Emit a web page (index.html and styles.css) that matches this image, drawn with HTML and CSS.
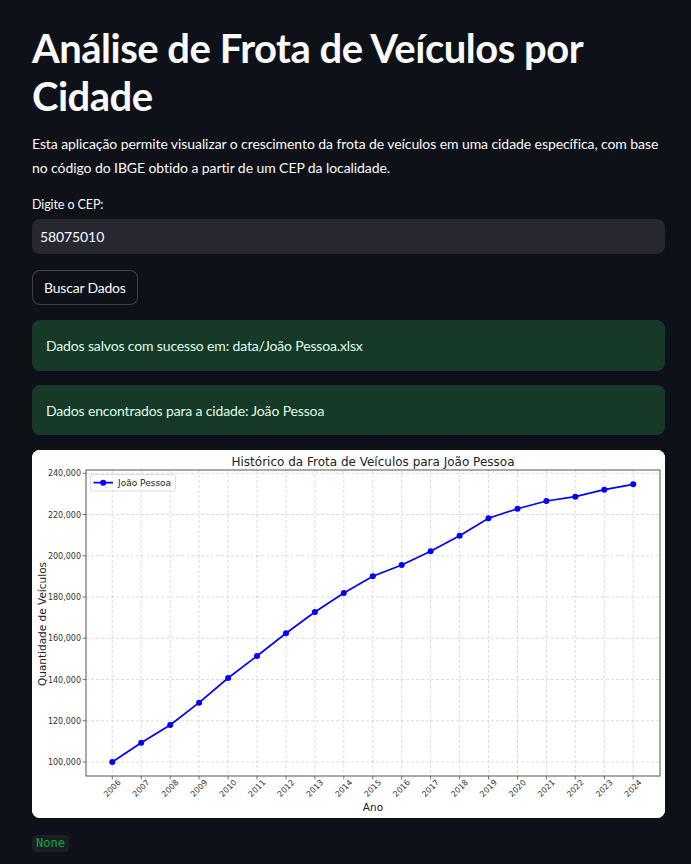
FILE: index.html
```html
<!DOCTYPE html>
<html lang="pt">
<head>
<meta charset="utf-8">
<title>Análise de Frota de Veículos por Cidade</title>
<link rel="stylesheet" href="styles.css">
</head>
<body>
<main class="main">
  <h1 class="title">Análise de Frota de Veículos por Cidade</h1>
  <p class="intro">Esta aplicação permite visualizar o crescimento da frota de veículos em uma cidade específica, com base no código do IBGE obtido a partir de um CEP da localidade.</p>
  <label class="field-label" for="cep">Digite o CEP:</label>
  <div class="input-box"><input id="cep" class="input" type="text" value="58075010"></div>
  <div class="btn-row"><button class="btn" type="button">Buscar Dados</button></div>
  <div class="alert">Dados salvos com sucesso em: data/João Pessoa.xlsx</div>
  <div class="alert">Dados encontrados para a cidade: João Pessoa</div>
  <div class="chart-card">
    <svg class="chart" viewBox="0 0 633 368" width="633" height="368" xmlns="http://www.w3.org/2000/svg">
      <rect x="0" y="0" width="633" height="368" fill="#ffffff"/>
      <text x="341" y="16" class="c-title" text-anchor="middle">Histórico da Frota de Veículos para João Pessoa</text>
      <g class="grid">
        <line x1="54" x2="628" y1="23.25" y2="23.25"/>
        <line x1="54" x2="628" y1="64.5" y2="64.5"/>
        <line x1="54" x2="628" y1="105.75" y2="105.75"/>
        <line x1="54" x2="628" y1="147" y2="147"/>
        <line x1="54" x2="628" y1="188.25" y2="188.25"/>
        <line x1="54" x2="628" y1="229.5" y2="229.5"/>
        <line x1="54" x2="628" y1="270.75" y2="270.75"/>
        <line x1="54" x2="628" y1="312" y2="312"/>
        <line y1="20" y2="326" x1="80.3" x2="80.3"/>
        <line y1="20" y2="326" x1="109.2" x2="109.2"/>
        <line y1="20" y2="326" x1="138.2" x2="138.2"/>
        <line y1="20" y2="326" x1="167.1" x2="167.1"/>
        <line y1="20" y2="326" x1="196.1" x2="196.1"/>
        <line y1="20" y2="326" x1="225" x2="225"/>
        <line y1="20" y2="326" x1="254" x2="254"/>
        <line y1="20" y2="326" x1="282.9" x2="282.9"/>
        <line y1="20" y2="326" x1="311.8" x2="311.8"/>
        <line y1="20" y2="326" x1="340.8" x2="340.8"/>
        <line y1="20" y2="326" x1="369.7" x2="369.7"/>
        <line y1="20" y2="326" x1="398.6" x2="398.6"/>
        <line y1="20" y2="326" x1="427.6" x2="427.6"/>
        <line y1="20" y2="326" x1="456.5" x2="456.5"/>
        <line y1="20" y2="326" x1="485.5" x2="485.5"/>
        <line y1="20" y2="326" x1="514.4" x2="514.4"/>
        <line y1="20" y2="326" x1="543.3" x2="543.3"/>
        <line y1="20" y2="326" x1="572.3" x2="572.3"/>
        <line y1="20" y2="326" x1="601.2" x2="601.2"/>
      </g>
      <rect x="54" y="20" width="574" height="306" class="spines"/>
      <g class="ticks">
        <line x1="50.5" x2="54" y1="23.25" y2="23.25"/>
        <line x1="50.5" x2="54" y1="64.5" y2="64.5"/>
        <line x1="50.5" x2="54" y1="105.75" y2="105.75"/>
        <line x1="50.5" x2="54" y1="147" y2="147"/>
        <line x1="50.5" x2="54" y1="188.25" y2="188.25"/>
        <line x1="50.5" x2="54" y1="229.5" y2="229.5"/>
        <line x1="50.5" x2="54" y1="270.75" y2="270.75"/>
        <line x1="50.5" x2="54" y1="312" y2="312"/>
        <line y1="326" y2="329.5" x1="80.3" x2="80.3"/>
        <line y1="326" y2="329.5" x1="109.2" x2="109.2"/>
        <line y1="326" y2="329.5" x1="138.2" x2="138.2"/>
        <line y1="326" y2="329.5" x1="167.1" x2="167.1"/>
        <line y1="326" y2="329.5" x1="196.1" x2="196.1"/>
        <line y1="326" y2="329.5" x1="225" x2="225"/>
        <line y1="326" y2="329.5" x1="254" x2="254"/>
        <line y1="326" y2="329.5" x1="282.9" x2="282.9"/>
        <line y1="326" y2="329.5" x1="311.8" x2="311.8"/>
        <line y1="326" y2="329.5" x1="340.8" x2="340.8"/>
        <line y1="326" y2="329.5" x1="369.7" x2="369.7"/>
        <line y1="326" y2="329.5" x1="398.6" x2="398.6"/>
        <line y1="326" y2="329.5" x1="427.6" x2="427.6"/>
        <line y1="326" y2="329.5" x1="456.5" x2="456.5"/>
        <line y1="326" y2="329.5" x1="485.5" x2="485.5"/>
        <line y1="326" y2="329.5" x1="514.4" x2="514.4"/>
        <line y1="326" y2="329.5" x1="543.3" x2="543.3"/>
        <line y1="326" y2="329.5" x1="572.3" x2="572.3"/>
        <line y1="326" y2="329.5" x1="601.2" x2="601.2"/>
      </g>
      <g class="ylabels" text-anchor="end">
        <text x="49" y="26.25">240,000</text>
        <text x="49" y="67.5">220,000</text>
        <text x="49" y="108.75">200,000</text>
        <text x="49" y="150">180,000</text>
        <text x="49" y="191.25">160,000</text>
        <text x="49" y="232.5">140,000</text>
        <text x="49" y="273.75">120,000</text>
        <text x="49" y="315">100,000</text>
      </g>
      <g class="xlabels" text-anchor="end">
        <text transform="translate(89.3 333) rotate(-45)">2006</text>
        <text transform="translate(118.2 333) rotate(-45)">2007</text>
        <text transform="translate(147.2 333) rotate(-45)">2008</text>
        <text transform="translate(176.1 333) rotate(-45)">2009</text>
        <text transform="translate(205.1 333) rotate(-45)">2010</text>
        <text transform="translate(234 333) rotate(-45)">2011</text>
        <text transform="translate(263 333) rotate(-45)">2012</text>
        <text transform="translate(291.9 333) rotate(-45)">2013</text>
        <text transform="translate(320.8 333) rotate(-45)">2014</text>
        <text transform="translate(349.8 333) rotate(-45)">2015</text>
        <text transform="translate(378.7 333) rotate(-45)">2016</text>
        <text transform="translate(407.6 333) rotate(-45)">2017</text>
        <text transform="translate(436.6 333) rotate(-45)">2018</text>
        <text transform="translate(465.5 333) rotate(-45)">2019</text>
        <text transform="translate(494.5 333) rotate(-45)">2020</text>
        <text transform="translate(523.4 333) rotate(-45)">2021</text>
        <text transform="translate(552.3 333) rotate(-45)">2022</text>
        <text transform="translate(581.3 333) rotate(-45)">2023</text>
        <text transform="translate(610.2 333) rotate(-45)">2024</text>
      </g>
      <text class="axis-label" x="341" y="361" text-anchor="middle">Ano</text>
      <text class="axis-label" transform="translate(14 174) rotate(-90)" text-anchor="middle">Quantidade de Veículos</text>
      <polyline class="series" points="80.3,312 109.2,292.7 138.2,275 167.1,252.7 196.1,228 225,206 254,183.3 282.9,162 311.8,143 340.8,126.3 369.7,115 398.6,101.3 427.6,85.7 456.5,68.3 485.5,58.7 514.4,51 543.3,46.7 572.3,39.7 601.2,34.3"/>
      <g class="dots">
        <circle cx="80.3" cy="312" r="3"/>
        <circle cx="109.2" cy="292.7" r="3"/>
        <circle cx="138.2" cy="275" r="3"/>
        <circle cx="167.1" cy="252.7" r="3"/>
        <circle cx="196.1" cy="228" r="3"/>
        <circle cx="225" cy="206" r="3"/>
        <circle cx="254" cy="183.3" r="3"/>
        <circle cx="282.9" cy="162" r="3"/>
        <circle cx="311.8" cy="143" r="3"/>
        <circle cx="340.8" cy="126.3" r="3"/>
        <circle cx="369.7" cy="115" r="3"/>
        <circle cx="398.6" cy="101.3" r="3"/>
        <circle cx="427.6" cy="85.7" r="3"/>
        <circle cx="456.5" cy="68.3" r="3"/>
        <circle cx="485.5" cy="58.7" r="3"/>
        <circle cx="514.4" cy="51" r="3"/>
        <circle cx="543.3" cy="46.7" r="3"/>
        <circle cx="572.3" cy="39.7" r="3"/>
        <circle cx="601.2" cy="34.3" r="3"/>
      </g>
      <rect class="legend" x="58.5" y="24.5" width="85" height="16.5" rx="2"/>
      <line class="series" x1="61.5" x2="81" y1="32.7" y2="32.7"/>
      <circle class="dot" cx="71.2" cy="32.7" r="3"/>
      <text class="legend-text" x="86" y="36">João Pessoa</text>
    </svg>
  </div>
  <div class="out-row"><code class="out">None</code></div>
</main>
</body>
</html>
```

FILE: styles.css
```css
html, body {
  margin: 0;
  padding: 0;
  background: #0e1117;
}

body {
  color: #fafafa;
  font-family: "Lato", sans-serif;
}

.main {
  width: 633px;
  margin-left: 32px;
  display: flex;
  flex-direction: column;
}

.title {
  margin: 0;
  padding-top: 24px;
  font-size: 40px;
  line-height: 48px;
  font-weight: 700;
  letter-spacing: -0.5px;
}

.intro {
  margin: 12px 0 0 0;
  font-size: 14px;
  line-height: 24px;
  letter-spacing: -0.08px;
}

.field-label {
  margin-top: 16px;
  font-size: 12.5px;
  line-height: 18px;
  letter-spacing: -0.1px;
}

.input-box {
  margin-top: 5px;
  height: 35px;
  border-radius: 8px;
  background: #262730;
  display: flex;
  align-items: center;
}

.input {
  flex: 1;
  border: 0;
  outline: 0;
  background: transparent;
  color: #fafafa;
  font-family: inherit;
  font-size: 14px;
  letter-spacing: -0.1px;
  padding: 0 8px;
}

.btn-row {
  margin-top: 16px;
  display: flex;
}

.btn {
  height: 35px;
  padding: 0 11px;
  border: 1px solid rgba(250, 250, 250, 0.2);
  border-radius: 8px;
  background: #0e1117;
  color: #fafafa;
  font-family: inherit;
  font-size: 14px;
  letter-spacing: -0.2px;
}

.alert {
  margin-top: 15px;
  height: 51px;
  padding: 0 14px;
  border-radius: 8px;
  background: #173928;
  color: #dffde9;
  font-size: 14px;
  letter-spacing: -0.15px;
  display: flex;
  align-items: center;
}

.alert + .alert {
  margin-top: 14px;
  height: 50px;
}

.chart-card {
  margin-top: 15px;
  width: 633px;
  height: 368px;
  border-radius: 8px;
  overflow: hidden;
  background: #ffffff;
}

.chart {
  display: block;
}

.grid line {
  stroke: #cfcfcf;
  stroke-width: 0.7;
  stroke-dasharray: 3 2;
}

.spines {
  fill: none;
  stroke: #555555;
  stroke-width: 1;
}

.ticks line {
  stroke: #555555;
  stroke-width: 0.8;
}

.ylabels text,
.xlabels text {
  font-family: "DejaVu Sans", sans-serif;
  font-size: 8px;
  fill: #333333;
}

.c-title {
  font-family: "DejaVu Sans", sans-serif;
  font-size: 12px;
  fill: #222222;
}

.axis-label {
  font-family: "DejaVu Sans", sans-serif;
  font-size: 10.5px;
  fill: #222222;
}

.series {
  fill: none;
  stroke: #0000ff;
  stroke-width: 1.7;
}

.dots circle,
.dot {
  fill: #0000ff;
}

.legend {
  fill: #ffffff;
  fill-opacity: 0.8;
  stroke: #d6d6d6;
  stroke-width: 0.8;
}

.legend-text {
  font-family: "DejaVu Sans", sans-serif;
  font-size: 9px;
  fill: #222222;
}

.out-row {
  margin-top: 17px;
  display: flex;
}

.out {
  padding: 0 4px;
  height: 17px;
  line-height: 17px;
  border-radius: 4px;
  background: #1b1e25;
  color: #09ab3b;
  font-family: "DejaVu Sans Mono", monospace;
  font-size: 12px;
}
```
